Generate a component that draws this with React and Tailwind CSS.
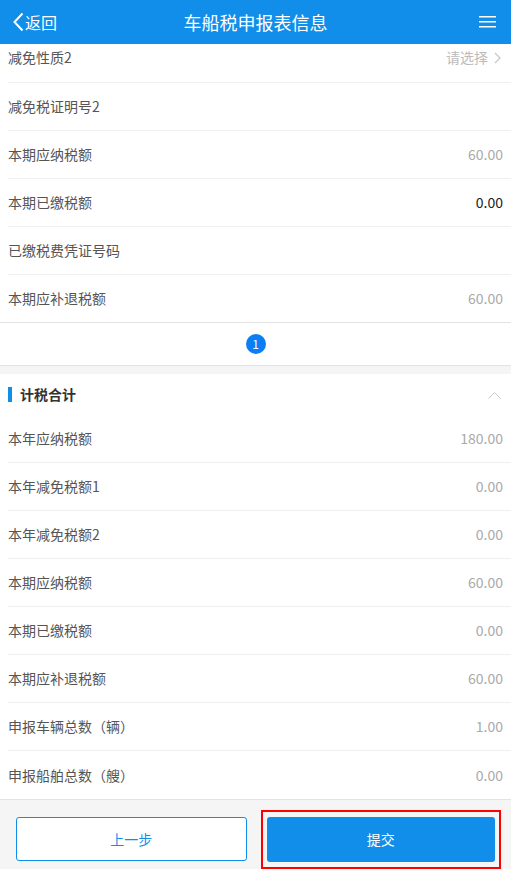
import React from 'react';

const font = { fontFamily: '"Noto Sans CJK SC", "Noto Sans", sans-serif' };

const topRows = [
  { label: '减免税证明号2', value: '' },
  { label: '本期应纳税额', value: '60.00' },
  { label: '本期已缴税额', value: '0.00', dark: true },
  { label: '已缴税费凭证号码', value: '' },
  { label: '本期应补退税额', value: '60.00', last: true },
];

const totalRows = [
  { label: '本年应纳税额', value: '180.00' },
  { label: '本年减免税额1', value: '0.00' },
  { label: '本年减免税额2', value: '0.00' },
  { label: '本期应纳税额', value: '60.00' },
  { label: '本期已缴税额', value: '0.00' },
  { label: '本期应补退税额', value: '60.00' },
  { label: '申报车辆总数（辆）', value: '1.00' },
  { label: '申报船舶总数（艘）', value: '0.00', last: true },
];

const Row = ({ label, value, dark, last, short }) => (
  <div className="pl-2">
    <div className={`${short ? 'h-[47px]' : 'h-[48px]'} flex items-center justify-between pr-2 ${last ? '' : 'border-b border-[#efefef]'}`}>
      <span className="text-[14px] text-[#555]">{label}</span>
      <span className={`text-[14px] ${dark ? 'text-[#222]' : 'text-[#aaa]'}`}>{value}</span>
    </div>
  </div>
);

export default function App() {
  return (
    <div className="w-[511px] h-[869px] bg-[#f5f5f5] flex flex-col overflow-hidden" style={font}>
      {/* Header */}
      <div className="h-[44px] shrink-0 bg-[#108ee9] flex items-center justify-between px-[13px] text-white">
        <div className="flex items-center gap-[1px] w-[80px]">
          <svg width="11" height="20" viewBox="0 0 11 20" fill="none">
            <path d="M9.5 1.5L1.5 10l8 8.5" stroke="white" strokeWidth="2" />
          </svg>
          <span className="text-[16px]">返回</span>
        </div>
        <span className="text-[18px]">车船税申报表信息</span>
        <div className="w-[80px] flex justify-end pr-[2px]">
          <svg width="17" height="12" viewBox="0 0 17 12">
            <rect y="0" width="17" height="1.5" fill="white" />
            <rect y="5" width="17" height="1.5" fill="white" />
            <rect y="10" width="17" height="1.5" fill="white" />
          </svg>
        </div>
      </div>

      <div className="flex-1 flex flex-col">
        {/* First list */}
        <div className="bg-white">
          <div className="pl-2">
            <div className="h-[39px] pb-[11px] flex items-center justify-between pr-[10px] border-b border-[#efefef]">
              <span className="text-[14px] text-[#555]">减免性质2</span>
              <div className="flex items-center gap-[6px] text-[#bbb]">
                <span className="text-[14px]">请选择</span>
                <svg width="7" height="12" viewBox="0 0 7 12" fill="none">
                  <path d="M1 1l5 5-5 5" stroke="#c7c7c7" strokeWidth="1.2" />
                </svg>
              </div>
            </div>
          </div>
          {topRows.map((r) => (
            <Row key={r.label} {...r} short={r.last} />
          ))}
          <div className="h-[44px] border-t border-b border-[#e3e3e3] flex items-center justify-center">
            <div className="w-[20px] h-[20px] rounded-full bg-[#0a7ff5] text-white text-[12px] flex items-center justify-center">1</div>
          </div>
        </div>

        <div className="h-[8px]" />

        {/* Totals */}
        <div className="bg-white">
          <div className="h-[41px] flex items-center justify-between pl-2 pr-[10px]">
            <div className="flex items-center gap-[8px]">
              <div className="w-[4px] h-[15px] bg-[#108ee9]" />
              <span className="text-[14px] font-bold text-[#333]">计税合计</span>
            </div>
            <svg width="13" height="8" viewBox="0 0 13 8" fill="none">
              <path d="M0.5 7.5l6-6 6 6" stroke="#c7c7c7" strokeWidth="1" />
            </svg>
          </div>
          {totalRows.map((r) => (
            <Row key={r.label} {...r} />
          ))}
        </div>

        {/* Footer buttons */}
        <div className="flex-1 border-t border-[#e3e3e3] flex items-start gap-[20px] px-[16px] pt-[17px]">
          <button className="flex-1 h-[44px] bg-white border border-[#108ee9] rounded-[3px] text-[#108ee9] text-[14px]">
            上一步
          </button>
          <div className="flex-1 relative">
            <div className="absolute -left-[6px] -right-[6px] -top-[7px] h-[59px] border-[2px] border-[#ff0000] pointer-events-none" />
            <button className="w-full h-[45px] bg-[#108ee9] rounded-[3px] text-white text-[14px]">
              提交
            </button>
          </div>
        </div>
      </div>
    </div>
  );
}
